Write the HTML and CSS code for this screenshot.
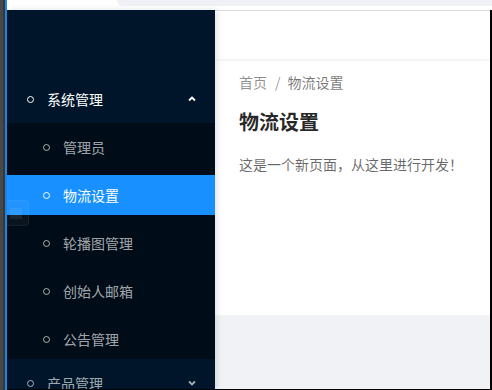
FILE: index.html
```html
<!DOCTYPE html>
<html lang="zh-CN">

<head>
    <meta charset="UTF-8">
    <meta name="viewport" content="width=device-width, initial-scale=1.0">
    <title>物流设置</title>
    <link rel="stylesheet" href="styles.css">
</head>

<body>
    <div class="screen">
        <div class="frame"></div>

        <div class="window">
            <div class="topbar">
                <div class="tab-strip"></div>
            </div>

            <div class="layout">
                <aside class="sidebar">
                    <div class="logo"></div>

                    <ul class="menu">
                        <li class="submenu open">
                            <div class="submenu-title">
                                <span class="dot"></span>
                                <span class="label">系统管理</span>
                                <svg class="arrow" width="8" height="6" viewBox="0 0 8 6">
                                    <path d="M1 4.5 L4 1.5 L7 4.5" fill="none" stroke="currentColor" stroke-width="1.8" />
                                </svg>
                            </div>
                            <ul class="submenu-list">
                                <li class="menu-item"><span class="dot"></span>管理员</li>
                                <li class="menu-item active"><span class="dot"></span>物流设置</li>
                                <li class="menu-item"><span class="dot"></span>轮播图管理</li>
                                <li class="menu-item"><span class="dot"></span>创始人邮箱</li>
                                <li class="menu-item"><span class="dot"></span>公告管理</li>
                            </ul>
                        </li>
                        <li class="submenu">
                            <div class="submenu-title">
                                <span class="dot"></span>
                                <span class="label">产品管理</span>
                                <svg class="arrow" width="8" height="6" viewBox="0 0 8 6">
                                    <path d="M1 1.5 L4 4.5 L7 1.5" fill="none" stroke="currentColor" stroke-width="1.8" />
                                </svg>
                            </div>
                        </li>
                    </ul>

                    <!-- floating helper button that sits over the menu -->
                    <div class="float-btn"><span></span></div>
                </aside>

                <main class="main">
                    <header class="header"></header>

                    <section class="content">
                        <div class="breadcrumb"><span class="crumb">首页</span><span class="sep">/</span><span class="crumb current">物流设置</span></div>
                        <h1 class="page-title">物流设置</h1>
                        <p class="page-text">这是一个新页面，从这里进行开发！</p>
                    </section>

                    <div class="footer-space"></div>
                </main>
            </div>
        </div>
    </div>
</body>

</html>
```

FILE: styles.css
```css
:root {
    --side-bg: #001529;
    --side-sub: #000c17;
    --primary: #1890ff;
    --page-bg: #f0f2f5;
    --text: rgba(0, 0, 0, 0.85);
    --muted: rgba(0, 0, 0, 0.45);
}

* {
    margin: 0;
    padding: 0;
    box-sizing: border-box;
}

html,
body {
    width: 492px;
    height: 390px;
    overflow: hidden;
}

body {
    font-family: "Noto Sans CJK SC", "Noto Sans", sans-serif;
    font-size: 14px;
    background: #ffffff;
}

ul {
    list-style: none;
}

.screen {
    display: flex;
    height: 390px;
}

/* editor frame on the far left */
.frame {
    width: 7px;
    flex-shrink: 0;
    background: linear-gradient(to right, #484848 0, #484848 3px, #383838 3px, #383838 5px, #1e88e5 5px);
}

.window {
    flex: 1;
    display: flex;
    flex-direction: column;
    border-bottom: 1px solid #000;
}

.topbar {
    height: 10px;
    background: #fff;
    position: relative;
}

.tab-strip {
    position: absolute;
    left: 110px;
    right: 0;
    top: 0;
    height: 6px;
    background: #f0f1f4;
    border-bottom-left-radius: 6px;
}

.layout {
    flex: 1;
    display: flex;
    min-height: 0;
}

/* sidebar */
.sidebar {
    width: 208px;
    flex-shrink: 0;
    background: var(--side-bg);
    position: relative;
    z-index: 1;
    box-shadow: 2px 0 6px rgba(0, 21, 41, 0.12);
    overflow: hidden;
}

.logo {
    height: 65px;
}

.menu {
    padding-top: 4px;
}

.submenu-title,
.menu-item {
    height: 40px;
    display: flex;
    align-items: center;
    color: rgba(255, 255, 255, 0.65);
}

.submenu-title {
    padding: 0 19px 0 20px;
}

.submenu.open .submenu-title {
    color: #fff;
}

.submenu-title .label {
    flex: 1;
}

.arrow {
    display: block;
}

.dot {
    width: 7px;
    height: 7px;
    border: 1.5px solid currentColor;
    border-radius: 50%;
    margin-right: 13px;
    flex-shrink: 0;
}

.submenu-list {
    background: var(--side-sub);
    margin-top: 4px;
    padding: 4px 0 0;
}

.menu-item {
    padding-left: 36px;
    margin-bottom: 8px;
}

.menu-item:last-child {
    margin-bottom: 4px;
}

.menu-item.active {
    background: var(--primary);
    color: #fff;
}

.submenu + .submenu .submenu-title {
    margin-top: 4px;
}

.float-btn {
    position: absolute;
    left: 0;
    top: 190px;
    width: 22px;
    height: 26px;
    border: 1px solid rgba(255, 255, 255, 0.06);
    border-left: none;
    border-radius: 0 4px 4px 0;
    background: rgba(255, 255, 255, 0.04);
    padding: 7px 5px 6px 3px;
}

.float-btn span {
    display: block;
    width: 12px;
    height: 11px;
    background: rgba(255, 255, 255, 0.07);
}

/* main area */
.main {
    flex: 1;
    display: flex;
    flex-direction: column;
    border-right: 2px solid #000;
    background: var(--page-bg);
}

.header {
    height: 49px;
    background: #fff;
    border-top: 1px solid #dcdcdc;
    box-shadow: 0 1px 3px rgba(0, 21, 41, 0.08);
    position: relative;
}

.content {
    height: 256px;
    background: #fff;
    padding: 12px 24px 0;
}

.breadcrumb {
    line-height: 22px;
    color: var(--muted);
}

.sep {
    margin: 0 7px 0 8px;
}

.crumb.current {
    color: rgba(0, 0, 0, 0.55);
}

.page-title {
    margin-top: 15px;
    font-size: 20px;
    line-height: 28px;
    font-weight: 700;
    color: var(--text);
}

.page-text {
    margin-top: 17px;
    line-height: 22px;
    color: rgba(0, 0, 0, 0.6);
}

.footer-space {
    flex: 1;
}
```
